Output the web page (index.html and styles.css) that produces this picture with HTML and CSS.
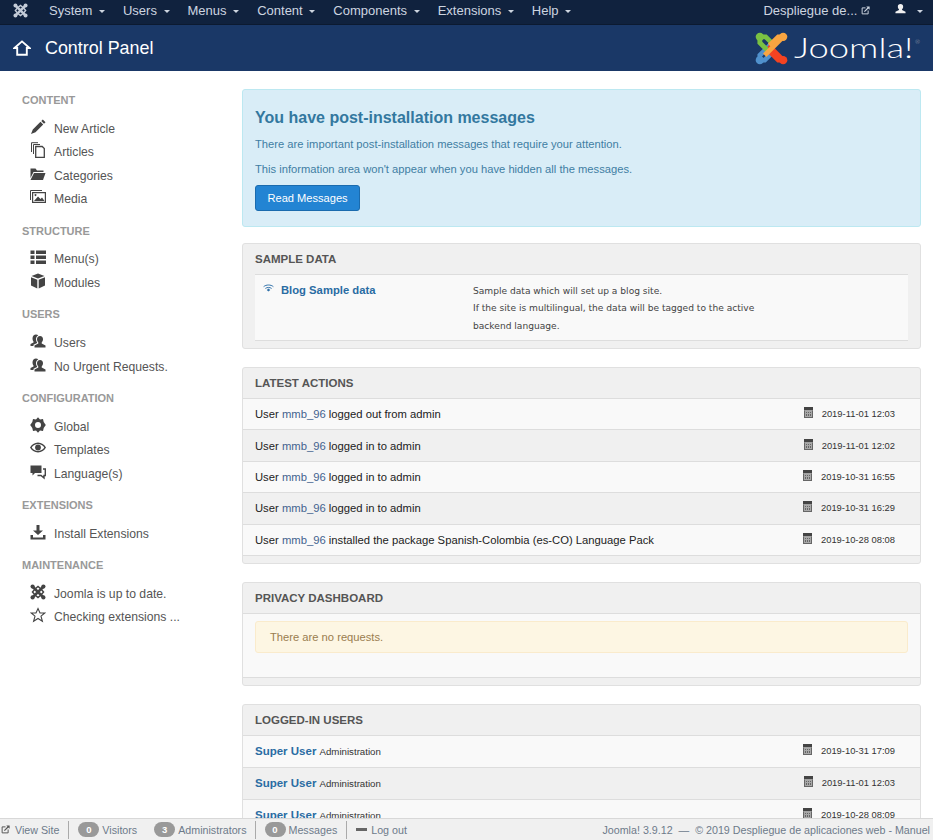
FILE: index.html
```html
<!DOCTYPE html>
<html lang="en">
<head>
  <meta charset="UTF-8">
  <title>Control Panel</title>
  <link rel="stylesheet" href="styles.css">
</head>
<body>
  <svg class="defs" width="0" height="0">
    <symbol id="i-joomla" viewBox="0 0 16 16">
      <g fill="none" stroke="currentColor" stroke-width="2.6">
        <path d="M3 3 13 13M13 3 3 13"/>
        <path d="M5 5 8 2.5 11 5 13.5 8 11 11 8 13.5 5 11 2.5 8Z" stroke-width="1.5"/>
      </g>
      <g fill="currentColor"><circle cx="2.6" cy="2.6" r="2.1"/><circle cx="13.4" cy="2.6" r="2.1"/><circle cx="2.6" cy="13.4" r="2.1"/><circle cx="13.4" cy="13.4" r="2.1"/></g>
    </symbol>
    <symbol id="i-users" viewBox="0 0 16 16">
      <path fill="currentColor" d="M10 3c2 0 3 1.400 3 3.200 0 1.300-.6 2.500-1.300 3.200v1.200l3.800 1.800V14.500H4.500v-2.100l3.800-1.800V9.400C7.600 8.700 7 7.500 7 6.200 7 4.400 8 3 10 3Z"/>
      <path fill="currentColor" d="M6 1.500c1 0 1.800.4 2.300 1.100C6.800 3.200 6 4.500 6 6.200c0 1.300.4 2.500 1.100 3.400v.4L3.500 11.800V13H.5v-2l3-1.500V8.500C2.900 7.800 2.500 6.700 2.500 5.200 2.500 3 4 1.500 6 1.500Z"/>
    </symbol>
    <symbol id="i-cal" viewBox="0 0 9 11">
      <path fill="currentColor" d="M0 0h9v3.500H0Z"/>
      <path fill="#a8a8a8" d="M0 3.500h9V11H0Z"/>
      <path fill="#666" d="M0 3.500h1V11H0ZM8 3.500h1V11H8ZM0 10h9v1H0ZM2 5h1v1H2ZM4 5h1v1H4ZM6 5h1v1H6ZM4 7h1v2H4ZM6 7h1v2H6ZM2 7h1v2H2Z"/>
    </symbol>
    <symbol id="i-ext" viewBox="0 0 12 12">
      <path fill="none" stroke="currentColor" stroke-width="1.300" d="M6 2.500H1.500v8h8V6"/>
      <path fill="none" stroke="currentColor" stroke-width="1.600" d="M4.500 7.500 10 2"/>
      <path fill="currentColor" d="M7 .5h4.500V5Z"/>
    </symbol>
  </svg>

  <nav class="navbar">
    <svg class="nav-logo"><use href="#i-joomla"/></svg>
    <ul class="menu">
      <li>System <i class="caret"></i></li>
      <li>Users <i class="caret"></i></li>
      <li>Menus <i class="caret"></i></li>
      <li>Content <i class="caret"></i></li>
      <li>Components <i class="caret"></i></li>
      <li>Extensions <i class="caret"></i></li>
      <li>Help <i class="caret"></i></li>
    </ul>
    <div class="nav-right">
      <span class="site-link">Despliegue de... <svg class="ext-icon"><use href="#i-ext"/></svg></span>
      <span class="user-menu">
        <svg class="user-icon" viewBox="0 0 12 12"><path fill="currentColor" d="M6 0c1.900 0 2.900 1.200 2.900 2.900 0 1.200-.5 2.200-1.200 2.800v.9L11.500 8.500V10H.5V8.500l3.800-1.900v-.9C3.600 5.100 3.100 4.100 3.100 2.900 3.100 1.200 4.100 0 6 0Z"/></svg>
        <i class="caret"></i>
      </span>
    </div>
  </nav>

  <header class="subhead">
    <h1 class="page-title">
      <svg class="home-icon" viewBox="0 0 18 16"><path fill="none" stroke="#fff" stroke-width="1.900" d="M1.500 8 9 1.400 16.500 8H13.800V14.800H4.200V8Z"/></svg>
      Control Panel
    </h1>
    <div class="brand">
      <svg class="brand-mark" viewBox="0 0 34 34">
        <g fill="none" stroke-width="5">
          <path stroke="#5091cd" d="M5 29 5 24 17 12"/>
          <path stroke="#5091cd" d="M5 29 10 29 17 22"/>
          <path stroke="#f44321" d="M29 29 14 14"/>
          <path stroke="#f44321" d="M29 29 24 29 16 21"/>
          <path stroke="#7ac143" d="M5 5 5 11 14 20"/>
          <path stroke="#7ac143" d="M5 5 11 5 19 13"/>
          <path stroke="#f9a541" d="M29 5 10 24"/>
          <path stroke="#f9a541" d="M29 5 24 5 15 14"/>
        </g>
        <circle cx="5" cy="5" r="4.300" fill="#7ac143"/>
        <circle cx="29" cy="5" r="4.300" fill="#f9a541"/>
        <circle cx="29" cy="29" r="4.300" fill="#f44321"/>
        <circle cx="5" cy="29" r="4.300" fill="#5091cd"/>
      </svg>
      <span class="brand-name"><span class="brand-text">Joomla!</span><sup>®</sup></span>
    </div>
  </header>

  <div class="layout">
    <aside class="sidebar">
      <h2 class="nav-header">Content</h2>
      <ul class="side-list">
        <li><svg class="side-icon" viewBox="0 0 16 16"><path fill="currentColor" d="M12.800.5 15.500 3.200 14 4.700 11.300 2ZM10.500 2.800 13.200 5.500 5.500 13.200 1 15 2.800 10.500Z"/></svg>New Article</li>
        <li><svg class="side-icon" viewBox="0 0 16 16"><path fill="none" stroke="currentColor" d="M1.500 10V.7H8M3.500 12V2.500H10"/><path fill="#fff" stroke="currentColor" stroke-width="1.300" d="M5.700 4.500h6.500L14.300 6.500V15.300H5.700Z"/></svg>Articles</li>
        <li><svg class="side-icon" viewBox="0 0 16 16"><path fill="currentColor" d="M.5 2.500h5L7 4.500h6.500V6H3.500L.5 12Z"/><path fill="currentColor" d="M4 7h11.500L13 14H.5Z"/></svg>Categories</li>
        <li><svg class="side-icon" viewBox="0 0 16 16"><path fill="none" stroke="currentColor" d="M.5 11V1.500H12"/><path fill="none" stroke="currentColor" stroke-width="1.200" d="M2.600 3.600H15.400V13.400H2.600Z"/><path fill="currentColor" d="M4 12 8 7.500 10.500 10 12 8.500 14.500 12ZM5.500 5a1 1 0 1 0 .01 0Z"/></svg>Media</li>
      </ul>
      <h2 class="nav-header">Structure</h2>
      <ul class="side-list">
        <li><svg class="side-icon" viewBox="0 0 16 16"><path fill="currentColor" d="M.5 1.500h4v3.500h-4ZM6 1.500h10v3.500H6ZM.5 6.500h4v3.500h-4ZM6 6.500h10v3.500H6ZM.5 11.500h4v3.500h-4ZM6 11.500h10v3.500H6Z"/></svg>Menu(s)</li>
        <li><svg class="side-icon" viewBox="0 0 16 16"><path fill="currentColor" d="M8 .5 14.500 3 8 5.500 1.500 3ZM1 4.200 7.300 6.700V15.500L1 12.500ZM15 4.200 8.700 6.700V15.500L15 12.500Z"/></svg>Modules</li>
      </ul>
      <h2 class="nav-header">Users</h2>
      <ul class="side-list">
        <li><svg class="side-icon"><use href="#i-users"/></svg>Users</li>
        <li><svg class="side-icon"><use href="#i-users"/></svg>No Urgent Requests.</li>
      </ul>
      <h2 class="nav-header">Configuration</h2>
      <ul class="side-list">
        <li><svg class="side-icon" viewBox="0 0 16 16"><path fill="currentColor" fill-rule="evenodd" d="M8 .2 10 2.400 13 1.900 13.700 5 15.800 8 13.700 11 13 14.100 10 13.600 8 15.800 6 13.600 3 14.100 2.300 11 .2 8 2.300 5 3 1.900 6 2.400ZM8 5A3 3 0 1 0 8 11 3 3 0 1 0 8 5Z"/></svg>Global</li>
        <li><svg class="side-icon" viewBox="0 0 16 16"><path fill="currentColor" fill-rule="evenodd" d="M8 2.500C11.500 2.500 14.500 4.800 16 7.500 14.500 10.200 11.500 12.500 8 12.500 4.500 12.500 1.500 10.200 0 7.500 1.500 4.800 4.500 2.500 8 2.500ZM8 4C5.500 4 3 5.500 1.700 7.500 3 9.500 5.500 11 8 11 10.500 11 13 9.500 14.300 7.500 13 5.500 10.500 4 8 4Z"/><circle cx="8" cy="7.500" r="2.900" fill="currentColor"/></svg>Templates</li>
        <li><svg class="side-icon" viewBox="0 0 16 16"><path fill="currentColor" d="M.5 1.500h11v7.500H5L2.500 11.500V9H.5Z"/><path fill="none" stroke="currentColor" stroke-width="1.400" d="M13 5h2.300v6.500H14V14L11 11.500H7.500"/></svg>Language(s)</li>
      </ul>
      <h2 class="nav-header">Extensions</h2>
      <ul class="side-list">
        <li><svg class="side-icon" viewBox="0 0 16 16"><path fill="currentColor" d="M6.500 1h3v5.500H13L8 11 3 6.500h3.500ZM.5 11h2.500v2.500h10V11h2.500v4.500H.5Z"/></svg>Install Extensions</li>
      </ul>
      <h2 class="nav-header">Maintenance</h2>
      <ul class="side-list">
        <li><svg class="side-icon"><use href="#i-joomla"/></svg>Joomla is up to date.</li>
        <li><svg class="side-icon" viewBox="0 0 16 16"><path fill="none" stroke="currentColor" stroke-width="1.100" d="M8 1.500 10 6H14.800L11 9.200 12.400 14.300 8 11.500 3.600 14.300 5 9.200 1.200 6H6Z"/></svg>Checking extensions ...</li>
      </ul>
    </aside>

    <main class="content">
      <section class="alert-box">
        <h2 class="alert-title">You have post-installation messages</h2>
        <p>There are important post-installation messages that require your attention.</p>
        <p>This information area won't appear when you have hidden all the messages.</p>
        <button class="btn-primary">Read Messages</button>
      </section>

      <section class="well sample-well">
        <h2 class="well-title">Sample Data</h2>
        <div class="sample-row">
          <div class="sample-name">
            <svg class="wifi-icon" viewBox="0 0 12 9"><g fill="none" stroke="currentColor" stroke-width="1.100"><path d="M.5 3C3.500.500 8.500.500 11.500 3"/><path d="M2.500 5C4.500 3.500 7.500 3.500 9.500 5"/></g><path fill="currentColor" d="M6 5.200 8 6.800 6 8.500 4 6.800Z"/></svg>
            <a class="sample-link">Blog Sample data</a>
          </div>
          <div class="sample-desc">Sample data which will set up a blog site.<br>If the site is multilingual, the data will be tagged to the active backend language.</div>
        </div>
      </section>

      <section class="well">
        <h2 class="well-title">Latest Actions</h2>
        <div class="rows">
          <div class="row"><span>User <a>mmb_96</a> logged out from admin</span><span class="stamp"><svg class="cal-icon"><use href="#i-cal"/></svg>2019-11-01 12:03</span></div>
          <div class="row"><span>User <a>mmb_96</a> logged in to admin</span><span class="stamp"><svg class="cal-icon"><use href="#i-cal"/></svg>2019-11-01 12:02</span></div>
          <div class="row"><span>User <a>mmb_96</a> logged in to admin</span><span class="stamp"><svg class="cal-icon"><use href="#i-cal"/></svg>2019-10-31 16:55</span></div>
          <div class="row"><span>User <a>mmb_96</a> logged in to admin</span><span class="stamp"><svg class="cal-icon"><use href="#i-cal"/></svg>2019-10-31 16:29</span></div>
          <div class="row"><span>User <a>mmb_96</a> installed the package Spanish-Colombia (es-CO) Language Pack</span><span class="stamp"><svg class="cal-icon"><use href="#i-cal"/></svg>2019-10-28 08:08</span></div>
        </div>
      </section>

      <section class="well">
        <h2 class="well-title">Privacy Dashboard</h2>
        <div class="privacy-body">
          <div class="notice">There are no requests.</div>
        </div>
      </section>

      <section class="well">
        <h2 class="well-title">Logged-in Users</h2>
        <div class="rows">
          <div class="row tall"><span><a class="user-link">Super User</a> <small>Administration</small></span><span class="stamp"><svg class="cal-icon"><use href="#i-cal"/></svg>2019-10-31 17:09</span></div>
          <div class="row tall"><span><a class="user-link">Super User</a> <small>Administration</small></span><span class="stamp"><svg class="cal-icon"><use href="#i-cal"/></svg>2019-11-01 12:03</span></div>
          <div class="row tall"><span><a class="user-link">Super User</a> <small>Administration</small></span><span class="stamp"><svg class="cal-icon"><use href="#i-cal"/></svg>2019-10-28 08:09</span></div>
        </div>
      </section>
    </main>
  </div>

  <footer class="status">
    <div class="status-left">
      <span class="status-item"><svg class="ext-icon dark"><use href="#i-ext"/></svg>View Site</span>
      <span class="status-item sep tight"><b class="badge">0</b>Visitors</span>
      <span class="status-item tight"><b class="badge">3</b>Administrators</span>
      <span class="status-item sep"><b class="badge">0</b>Messages</span>
      <span class="status-item sep"><i class="minus"></i>Log out</span>
    </div>
    <div class="status-right">Joomla! 3.9.12 &nbsp;—&nbsp; © 2019 Despliegue de aplicaciones web - Manuel</div>
  </footer>
</body>
</html>
```

FILE: styles.css
```css
* {
  box-sizing: border-box;
}

html, body {
  height: 100%;
}

body {
  margin: 0;
  font-family: "Liberation Sans", Arial, sans-serif;
  font-size: 12.2px;
  line-height: 18px;
  color: #333;
  background: #fff;
  overflow: hidden;
}

.defs {
  position: absolute;
}

ul {
  list-style: none;
  margin: 0;
  padding: 0;
}

/* top bar */
.navbar {
  height: 25px;
  display: flex;
  align-items: center;
  padding-bottom: 2px;
  background: #10223e;
  border-bottom: 1px solid #0c1a30;
  color: #cdd5e0;
  font-size: 13px;
}

.nav-logo {
  width: 15px;
  height: 15px;
  margin: 0 0 2px 13px;
  color: #c4ccd8;
}

.menu {
  display: flex;
  margin-left: 21px;
  gap: 18px;
}

.menu li {
  white-space: nowrap;
}

.caret {
  display: inline-block;
  width: 0;
  height: 0;
  margin-left: 3px;
  vertical-align: middle;
  border-top: 3px solid #cdd5e0;
  border-left: 3px solid transparent;
  border-right: 3px solid transparent;
}

.nav-right {
  margin-left: auto;
  display: flex;
  align-items: center;
  padding-right: 10px;
}

.site-link {
  white-space: nowrap;
}

.ext-icon {
  width: 9px;
  height: 9px;
}

.user-menu {
  display: flex;
  align-items: center;
  margin-left: 25px;
  gap: 8px;
}

.user-icon {
  width: 11px;
  height: 11px;
  margin-bottom: 3px;
  color: #f0f0f0;
}

/* blue header */
.subhead {
  height: 46px;
  display: flex;
  align-items: center;
  justify-content: space-between;
  background: #1a3867;
  color: #fff;
  padding: 0 0 0 13px;
}

.page-title {
  display: flex;
  align-items: center;
  gap: 14px;
  margin: 0;
  font-size: 17.9px;
  font-weight: 400;
  line-height: 24px;
}

.home-icon {
  width: 18px;
  height: 16px;
}

.brand {
  display: flex;
  align-items: center;
  gap: 6px;
  width: 178px;
}

.brand-mark {
  width: 33px;
  height: 33px;
  flex: none;
}

.brand-name {
  display: flex;
  width: 134px;
  font-family: "Lato", "Liberation Sans", sans-serif;
  font-weight: 300;
  font-size: 27px;
  line-height: 32px;
}

.brand-text {
  display: inline-block;
  width: 121px;
  transform: scaleX(1.35);
  transform-origin: left center;
}

.brand-name sup {
  font-size: 6px;
  line-height: 20px;
  color: #bbb;
}

/* columns */
.layout {
  display: flex;
  height: 769px;
}

.sidebar {
  width: 242px;
  flex: none;
  padding: 21px 0 0 22px;
}

.nav-header {
  margin: 0 0 8px;
  color: #999;
  font-size: 11px;
  font-weight: 700;
  line-height: 17px;
  text-transform: uppercase;
}

.side-list {
  margin-bottom: 11.65px;
}

.side-list li {
  display: flex;
  align-items: center;
  height: 23.5px;
  padding-left: 8px;
  color: #555;
  white-space: nowrap;
}

.side-icon {
  width: 16px;
  height: 16px;
  margin: -4px 8px 0 0;
  color: #444;
  flex: none;
}

.content {
  flex: 1;
  padding: 18px 12px 0 0;
  min-width: 0;
}

/* post-install message */
.alert-box {
  height: 138px;
  margin-bottom: 16px;
  padding: 18px 12px 0;
  background: #d9edf7;
  border: 1px solid #bce8f1;
  border-radius: 3px;
  color: #3f7ea3;
  font-size: 11.2px;
}

.alert-title {
  margin: 0 0 7px;
  color: #33789f;
  font-size: 16px;
  line-height: 20px;
}

.alert-box p {
  margin: 0 0 7px;
}

.btn-primary {
  display: block;
  margin-top: 5px;
  height: 26px;
  padding: 0 11.5px;
  background: #2384d3;
  border: 1px solid #1a6bae;
  border-radius: 3px;
  color: #fff;
  font: 11.1px "Liberation Sans", Arial, sans-serif;
}

/* modules */
.well {
  margin-bottom: 18px;
  background: #f0f0f0;
  border: 1px solid #e0e0e0;
  border-radius: 3px;
  padding-bottom: 7px;
}

.well-title {
  margin: 0;
  padding: 0 12px;
  height: 30px;
  color: #555;
  font-size: 11.5px;
  font-weight: 700;
  line-height: 30px;
  text-transform: uppercase;
}

.sample-row {
  display: flex;
  margin: 0 12px;
  height: 67px;
  padding-top: 6px;
  background: #f9f9f9;
  border-top: 1px solid #ddd;
  border-bottom: 1px solid #ddd;
}

.sample-name {
  width: 218px;
  flex: none;
  display: flex;
  align-items: flex-start;
  padding-left: 8px;
}

.wifi-icon {
  width: 11px;
  height: 8px;
  margin: 3px 7px 0 0;
  color: #3071a9;
}

.sample-link {
  color: #2a6ca3;
  font-weight: 700;
  font-size: 11.25px;
}

.sample-desc {
  width: 295px;
  margin-top: 2px;
  color: #444;
  font-family: "DejaVu Sans", sans-serif;
  font-size: 9.1px;
  line-height: 17.3px;
}

.rows {
  border-bottom: 1px solid #ddd;
}

.row {
  display: flex;
  justify-content: space-between;
  align-items: center;
  height: 31.4px;
  padding: 0 25px 0 12px;
  background: #f9f9f9;
  border-top: 1px solid #ddd;
  font-size: 11.25px;
  color: #222;
}

.row.tall {
  height: 32px;
}

.row:nth-child(even) {
  background: #f0f0f0;
}

.row a {
  color: #44638f;
}

.row a.user-link {
  color: #2a6ca3;
  font-weight: 700;
  font-size: 11.5px;
}

.row small {
  font-size: 9.7px;
  color: #333;
}

.stamp {
  display: flex;
  align-items: center;
  color: #333;
  font-size: 9.4px;
}

.cal-icon {
  width: 9px;
  height: 11px;
  margin: -3px 9px 0 0;
  color: #444;
}

.privacy-body {
  height: 65px;
  padding: 7px 12px 0;
  background: #f9f9f9;
  border-top: 1px solid #ddd;
  border-bottom: 1px solid #ddd;
}

.notice {
  height: 32px;
  padding-left: 14px;
  background: #fdf6e3;
  border: 1px solid #faebcc;
  border-radius: 3px;
  color: #9a7d4f;
  font-size: 11.2px;
  line-height: 30px;
}

/* status bar */
.status {
  position: fixed;
  left: 0;
  right: 0;
  bottom: 0;
  height: 22px;
  display: flex;
  justify-content: space-between;
  align-items: center;
  padding: 0 3px 0 0;
  background: #f0f0f0;
  border-top: 1px solid #d8d8d8;
  font-size: 10.7px;
  color: #6d7a8a;
  white-space: nowrap;
}

.status-left {
  display: flex;
  align-items: center;
}

.status-item {
  display: flex;
  align-items: center;
  padding: 0 9px;
}

.status-item:first-child {
  padding-left: 0;
}

.status-item.tight {
  padding-right: 8px;
}

.sep {
  border-left: 1px solid #aaa;
}

.ext-icon.dark {
  margin: 0 5px 0 1px;
  color: #555;
}

.badge {
  display: inline-block;
  width: 21px;
  height: 15px;
  margin-right: 3px;
  background: #999;
  border-radius: 8px;
  color: #fff;
  font-size: 9.5px;
  line-height: 15px;
  text-align: center;
}

.minus {
  width: 11px;
  height: 3px;
  margin-right: 4px;
  background: #666;
}
```
